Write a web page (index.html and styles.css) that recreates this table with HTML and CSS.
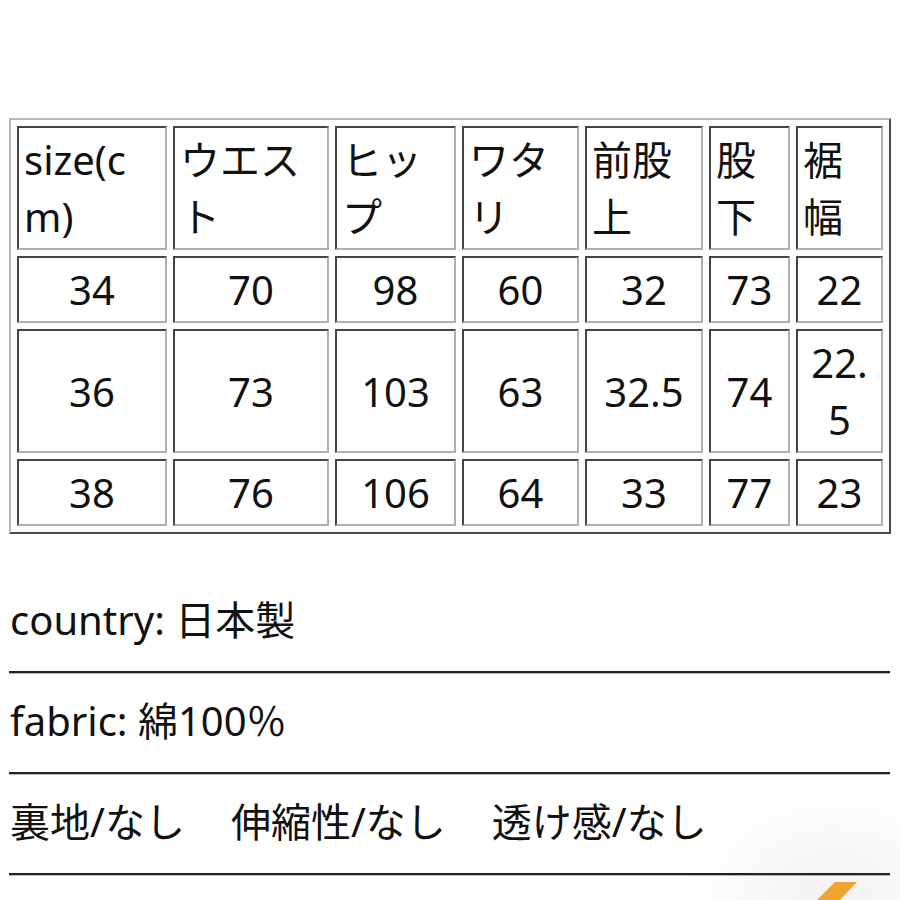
FILE: index.html
```html
<!DOCTYPE html>
<html lang="ja">
<head>
<meta charset="utf-8">
<title>size</title>
<link rel="stylesheet" href="styles.css">
</head>
<body>
<div class="page">
  <table class="size-table">
    <colgroup>
      <col class="c1"><col class="c2"><col class="c3"><col class="c4"><col class="c5"><col class="c6"><col class="c7">
    </colgroup>
    <tr class="head">
      <td>size(cm)</td><td>ウエスト</td><td>ヒップ</td><td>ワタリ</td><td>前股上</td><td>股下</td><td>裾幅</td>
    </tr>
    <tr>
      <td>34</td><td>70</td><td>98</td><td>60</td><td>32</td><td>73</td><td>22</td>
    </tr>
    <tr>
      <td>36</td><td>73</td><td>103</td><td>63</td><td>32.5</td><td>74</td><td>22.5</td>
    </tr>
    <tr>
      <td>38</td><td>76</td><td>106</td><td>64</td><td>33</td><td>77</td><td>23</td>
    </tr>
  </table>

  <div class="info">
    <p class="line">country: 日本製</p>
    <hr class="rule">
    <p class="line">fabric: 綿100％</p>
    <hr class="rule">
    <p class="line items"><span>裏地/なし</span><span>伸縮性/なし</span><span>透け感/なし</span></p>
    <hr class="rule">
  </div>
</div>
<div class="shade"></div>
<div class="mark"></div>
</body>
</html>
```
FILE: styles.css
```css
html, body {
  margin: 0;
  padding: 0;
  background: #ffffff;
}
body {
  width: 900px;
  height: 900px;
  overflow: hidden;
  position: relative;
  font-family: "Noto Sans", "Noto Sans CJK JP", sans-serif;
  color: #111;
}
.page {
  padding: 118px 0 0 9px;
  width: 882px;
}
.size-table {
  border-collapse: separate;
  border-spacing: 6px;
  table-layout: fixed;
  width: 882px;
  border-style: solid;
  border-width: 2px;
  border-color: #b8b8b8 #4a4a4a #4a4a4a #b8b8b8;
  font-size: 40px;
  line-height: 57px;
}
.c1 { width: 150px; }
.c2 { width: 156px; }
.c3 { width: 121px; }
.c4 { width: 117px; }
.c5 { width: 118px; }
.c6 { width: 81px; }
.c7 { width: 87px; }
.size-table td {
  border-style: solid;
  border-width: 2px;
  border-color: #444 #b0b0b0 #b0b0b0 #444;
  padding: 3px 5px;
  text-align: center;
  vertical-align: middle;
  word-break: break-all;
}
.size-table .head td {
  text-align: left;
}
.info {
  margin-top: 57px;
}
.line {
  margin: 0;
  font-size: 40px;
  line-height: 57px;
  padding-left: 1px;
  white-space: nowrap;
}
.items {
  display: flex;
  gap: 46px;
}
.rule {
  margin: 23px 0 18px 0;
  height: 0;
  border: 0;
  border-top: 2px solid #222;
  border-bottom: 1px solid #b8b8b8;
  width: 881px;
}
.shade {
  position: absolute;
  right: 0;
  bottom: 0;
  width: 220px;
  height: 120px;
  background: radial-gradient(ellipse at 70% 100%, rgba(0,0,0,0.05), rgba(0,0,0,0) 70%);
}
.mark {
  position: absolute;
  left: 817px;
  top: 882px;
  width: 40px;
  height: 18px;
  background: #f0a232;
  clip-path: polygon(18px 0, 40px 0, 23px 18px, 0 18px);
}
```
